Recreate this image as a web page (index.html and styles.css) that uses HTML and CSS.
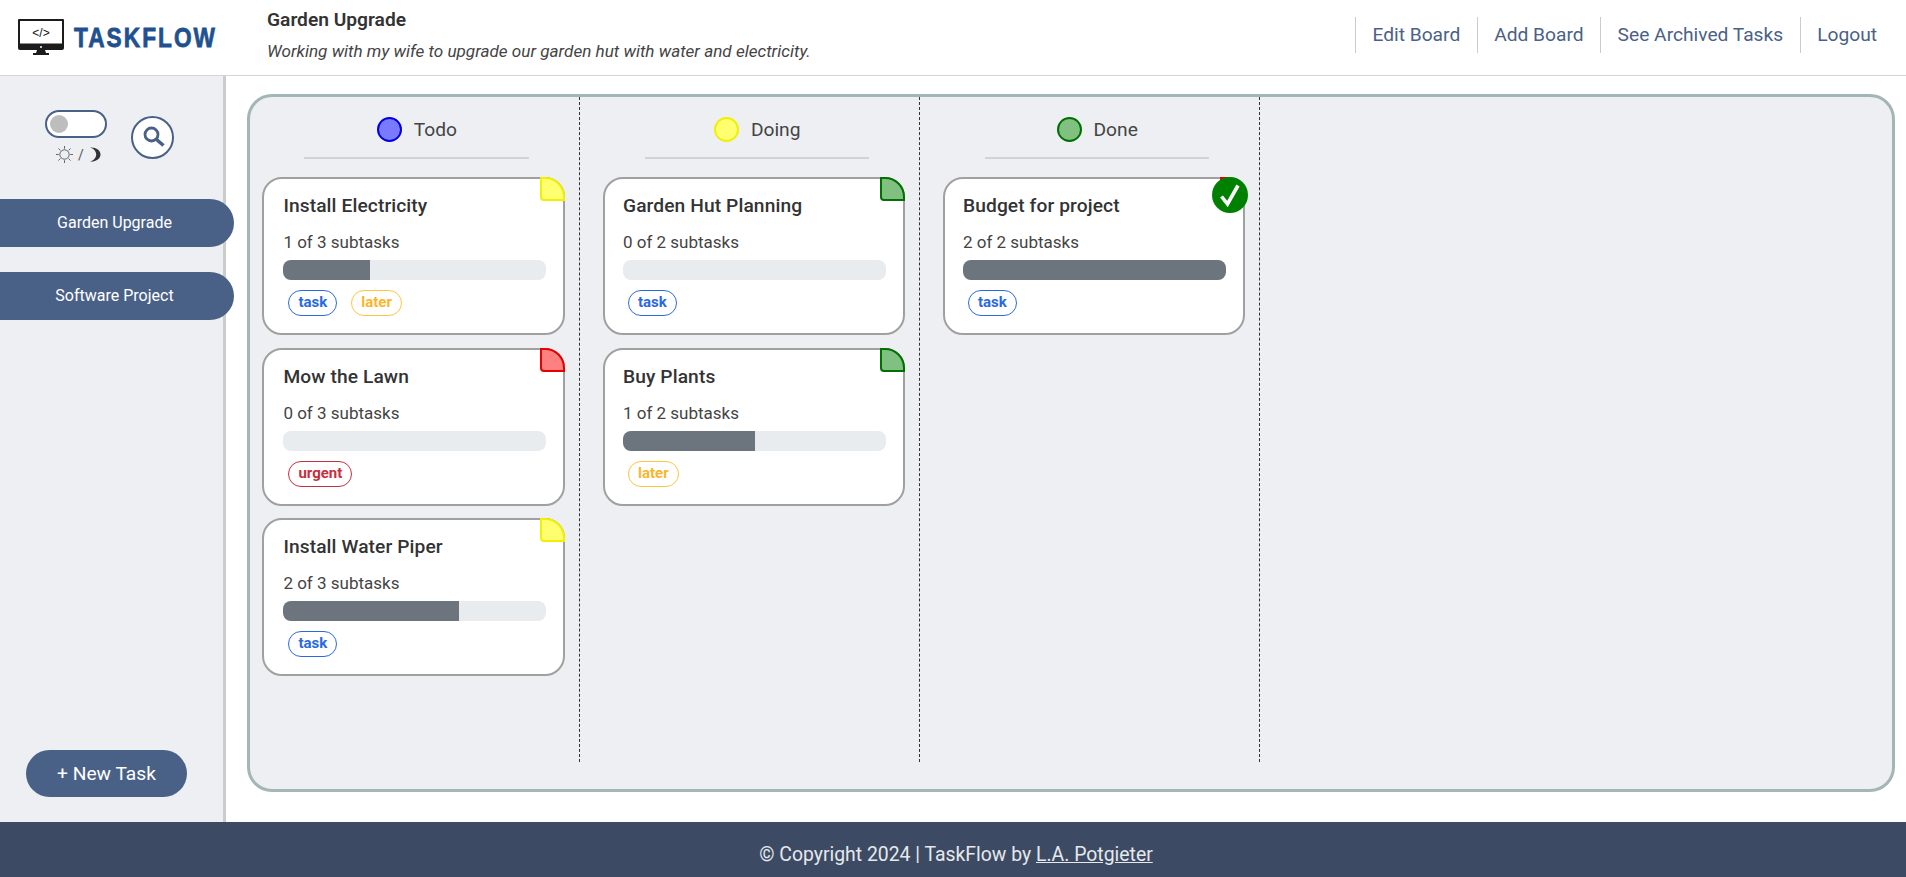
FILE: index.html
```html
<!DOCTYPE html>
<html>
<head>
  <meta charset="UTF-8">
  <title>TaskFlow</title>
  <link rel="stylesheet" href="styles.css">
</head>
<body>
  <header class="topbar">
    <div class="logo">
      <svg class="logo-icon" width="46" height="37" viewBox="0 0 46 37">
        <path d="M1 0h44a1 1 0 0 1 1 1v28a2 2 0 0 1-2 2H2a2 2 0 0 1-2-2V1a1 1 0 0 1 1-1z" fill="#1c1c1c"/>
        <rect x="2" y="2" width="42" height="22.5" fill="#fff"/>
        <circle cx="23" cy="28" r="1" fill="#fff"/>
        <path d="M19 31h8l1 3h3v2H15v-2h3z" fill="#1c1c1c"/>
        <text x="23" y="18" class="logo-code">&lt;/&gt;</text>
      </svg>
      <span class="logo-text">TASKFLOW</span>
    </div>
    <div class="board-info">
      <h1>Garden Upgrade</h1>
      <p>Working with my wife to upgrade our garden hut with water and electricity.</p>
    </div>
    <nav class="topnav">
      <a href="#">Edit Board</a>
      <a href="#">Add Board</a>
      <a href="#">See Archived Tasks</a>
      <a href="#">Logout</a>
    </nav>
  </header>

  <div class="middle">
    <aside class="sidebar">
      <div class="tools">
        <div class="theme">
          <div class="toggle"><span class="knob"></span></div>
          <div class="theme-icons">
            <svg width="17" height="17" viewBox="0 0 16 16" fill="none" stroke="#333" stroke-width="0.7">
              <circle cx="8" cy="8" r="4.400"/>
              <path d="M8 0v2.600M8 13.400V16M0 8h2.600M13.400 8H16M2.300 2.300l1.900 1.900M11.800 11.800l1.900 1.900M2.300 13.700l1.900-1.900M11.800 4.200l1.900-1.900"/>
            </svg>
            <span>/</span>
            <svg width="12" height="15" viewBox="0 0 12 15">
              <path d="M1 .5c6-.5 10.500 2.800 10.500 7S7 15 1 14.500c3.800-1 6.200-3.800 6.200-7S4.800 1.500 1 .5z" fill="#333"/>
            </svg>
          </div>
        </div>
        <button class="search">
          <svg width="24" height="24" viewBox="0 0 24 24" fill="none" stroke="#4a6187">
            <circle cx="9.500" cy="9.500" r="6.500" stroke-width="2.800"/>
            <path d="M14.500 14.500l7 6" stroke-width="3.600"/>
          </svg>
        </button>
      </div>
      <a class="board-link" href="#">Garden Upgrade</a>
      <a class="board-link" href="#">Software Project</a>
      <button class="new-task">+ New Task</button>
    </aside>

    <main class="content">
      <div class="board">
        <section class="column">
          <div class="column-head"><span class="dot dot-todo"></span>Todo</div>
          <div class="card">
            <span class="corner corner-yellow"></span>
            <h2>Install Electricity</h2>
            <p>1 of 3 subtasks</p>
            <div class="progress"><div class="progress-fill" style="width: 33%"></div></div>
            <div class="tags"><span class="tag tag-task">task</span><span class="tag tag-later">later</span></div>
          </div>
          <div class="card">
            <span class="corner corner-red"></span>
            <h2>Mow the Lawn</h2>
            <p>0 of 3 subtasks</p>
            <div class="progress"></div>
            <div class="tags"><span class="tag tag-urgent">urgent</span></div>
          </div>
          <div class="card">
            <span class="corner corner-yellow"></span>
            <h2>Install Water Piper</h2>
            <p>2 of 3 subtasks</p>
            <div class="progress"><div class="progress-fill" style="width: 66.6%"></div></div>
            <div class="tags"><span class="tag tag-task">task</span></div>
          </div>
        </section>

        <section class="column">
          <div class="column-head"><span class="dot dot-doing"></span>Doing</div>
          <div class="card">
            <span class="corner corner-green"></span>
            <h2>Garden Hut Planning</h2>
            <p>0 of 2 subtasks</p>
            <div class="progress"></div>
            <div class="tags"><span class="tag tag-task">task</span></div>
          </div>
          <div class="card">
            <span class="corner corner-green"></span>
            <h2>Buy Plants</h2>
            <p>1 of 2 subtasks</p>
            <div class="progress"><div class="progress-fill" style="width: 50%"></div></div>
            <div class="tags"><span class="tag tag-later">later</span></div>
          </div>
        </section>

        <section class="column">
          <div class="column-head"><span class="dot dot-done"></span>Done</div>
          <div class="card">
            <span class="corner corner-red"></span>
            <span class="done-mark">
              <svg width="22" height="24" viewBox="0 0 22 24" fill="none" stroke="#fff" stroke-width="3.600">
                <path d="M2.500 13.500l6 7.500L19 2.500"/>
              </svg>
            </span>
            <h2>Budget for project</h2>
            <p>2 of 2 subtasks</p>
            <div class="progress"><div class="progress-fill" style="width: 100%"></div></div>
            <div class="tags"><span class="tag tag-task">task</span></div>
          </div>
        </section>
      </div>
    </main>
  </div>

  <footer class="footer">© Copyright 2024 | TaskFlow by <a href="#">L.A. Potgieter</a></footer>
</body>
</html>
```

FILE: styles.css
```css
* {
  box-sizing: border-box;
}
body {
  margin: 0;
  height: 100vh;
  display: flex;
  flex-direction: column;
  overflow: hidden;
  font-family: Roboto, sans-serif;
  color: #333;
  background-color: #fff;
}

/* top bar */
.topbar {
  height: 76px;
  flex: none;
  display: flex;
  align-items: center;
  border-bottom: 1px solid #d4d4d4;
  padding-left: 18px;
}
.logo {
  width: 249px;
  display: flex;
  align-items: center;
  gap: 10px;
}
.logo-code {
  font-family: "Liberation Sans", sans-serif;
  font-size: 12px;
  text-anchor: middle;
  fill: #111;
}
.logo-text {
  font-family: "Liberation Sans", sans-serif;
  font-weight: 700;
  font-size: 28px;
  letter-spacing: 2.500px;
  color: #1f5190;
  -webkit-text-stroke: 0.8px #1f5190;
  transform: scaleX(0.81);
  transform-origin: left center;
}
.board-info {
  flex: 1;
  margin-bottom: 5px;
}
.board-info h1 {
  margin: 0 0 11px;
  font-size: 19.200px;
  line-height: 20px;
  font-weight: 600;
}
.board-info p {
  margin: 0;
  font-size: 17.100px;
  line-height: 20px;
  font-style: italic;
  color: #444;
}
.topnav {
  display: flex;
  margin: 0 12.500px 5px 0;
}
.topnav a {
  height: 36px;
  padding: 0 16.500px;
  border-left: 1px solid #ccc;
  font-size: 19.200px;
  line-height: 36px;
  color: #4a6187;
  text-decoration: none;
}

/* middle part */
.middle {
  flex: 1;
  display: flex;
  min-height: 0;
}
.sidebar {
  width: 226px;
  flex: none;
  display: flex;
  flex-direction: column;
  background-color: #edeff3;
  border-right: 3px solid #ccc;
}
.tools {
  display: flex;
  height: 123px;
  padding: 34px 0 0 45px;
}
.theme {
  width: 62px;
}
.toggle {
  width: 62px;
  height: 28px;
  padding: 3px;
  background-color: #fff;
  border: 2px solid #4a6187;
  border-radius: 14px;
}
.knob {
  display: block;
  width: 18px;
  height: 18px;
  border-radius: 50%;
  background-color: #bdbdbd;
}
.theme-icons {
  display: flex;
  align-items: center;
  justify-content: center;
  gap: 5px;
  margin: 8px 0 0 5px;
  font-size: 14px;
  color: #555;
}
.search {
  width: 43px;
  height: 43px;
  margin: 6px 0 0 24px;
  padding: 2px 0 0 2px;
  background-color: #fff;
  border: 2px solid #4a6187;
  border-radius: 50%;
}
.board-link {
  width: 234px;
  height: 48px;
  margin-bottom: 25px;
  flex: none;
  position: relative;
  padding: 0 5px 2px 0;
  display: flex;
  align-items: center;
  justify-content: center;
  font-size: 16px;
  color: #fff;
  text-decoration: none;
  background-color: #4a6187;
  border-radius: 0 24px 24px 0;
}
.new-task {
  width: 161px;
  height: 47px;
  margin: auto 0 25px 26px;
  font-family: Roboto, sans-serif;
  font-size: 19.200px;
  color: #fff;
  background-color: #4a6187;
  border: none;
  border-radius: 24px;
}

/* board */
.content {
  flex: 1;
  padding: 18px 11px 30px 21px;
}
.board {
  height: 100%;
  display: flex;
  padding-bottom: 27px;
  background-color: #edeff3;
  border: 3px solid #a3b5b5;
  border-radius: 25px;
}
.column {
  width: 340px;
  padding: 0 14px 0 22.600px;
  border-right: 1px dashed #333;
}
.column:first-child {
  width: 330.400px;
  padding-left: 12.400px;
}
.column-head {
  height: 62px;
  margin: 0 36px 18px 42px;
  display: flex;
  align-items: center;
  justify-content: center;
  gap: 12px;
  padding-top: 5px;
  font-size: 19.200px;
  color: #444;
  border-bottom: 2px solid #cfd2d8;
}
.dot {
  width: 25px;
  height: 25px;
  border-radius: 50%;
  border: 2px solid;
}
.dot-todo {
  background-color: #7a7aff;
  border-color: #0000e0;
}
.dot-doing {
  background-color: #ffff70;
  border-color: #f0f000;
}
.dot-done {
  background-color: #80c080;
  border-color: #007000;
}

/* cards */
.card {
  position: relative;
  height: 158px;
  margin-bottom: 12.500px;
  padding: 16px 17px 0 18px;
  background-color: #fff;
  border: 2px solid #a0a0a0;
  border-radius: 20px;
}
.column:first-child .card {
  padding-left: 19px;
}
.card h2 {
  margin: 0;
  font-size: 19.200px;
  line-height: 22px;
  font-weight: 500;
  letter-spacing: 0.100px;
}
.card p {
  margin: 15px 0 8px;
  font-size: 17px;
  line-height: 20px;
  color: #444;
}
.corner {
  position: absolute;
  top: -2px;
  right: -2px;
  width: 25px;
  height: 24px;
  border: 2px solid;
  border-radius: 0 20px 0 4px;
}
.corner-yellow {
  background-color: #ffff70;
  border-color: #f0f000;
}
.corner-red {
  background-color: #ff8080;
  border-color: #e80000;
}
.corner-green {
  background-color: #80c080;
  border-color: #007000;
}
.done-mark {
  position: absolute;
  top: -2px;
  right: -5px;
  width: 36px;
  height: 36px;
  padding: 6px 0 0 7px;
  background-color: #008000;
  border-radius: 50%;
}
.progress {
  height: 20px;
  overflow: hidden;
  background-color: #e9ecef;
  border-radius: 8px;
}
.progress-fill {
  height: 100%;
  background-color: #6c757d;
}
.tags {
  display: flex;
  gap: 14px;
  margin: 10px 0 0 5px;
}
.tag {
  height: 26px;
  padding: 0 9px;
  font-size: 15px;
  line-height: 23px;
  font-weight: 700;
  border: 1.500px solid;
  border-radius: 13px;
}
.tag-task {
  color: #2a6ae0;
  border-color: #2a6ae0;
}
.tag-later {
  color: #f9b62d;
  border-color: #fcc53f;
}
.tag-urgent {
  color: #c5303e;
  border-color: #c5303e;
}

/* footer */
.footer {
  height: 55px;
  flex: none;
  padding: 10px 0 0 6px;
  text-align: center;
  font-size: 19.400px;
  line-height: 45px;
  color: #e6e8ec;
  background-color: #3c4b63;
}
.footer a {
  color: #e6e8ec;
}
```
